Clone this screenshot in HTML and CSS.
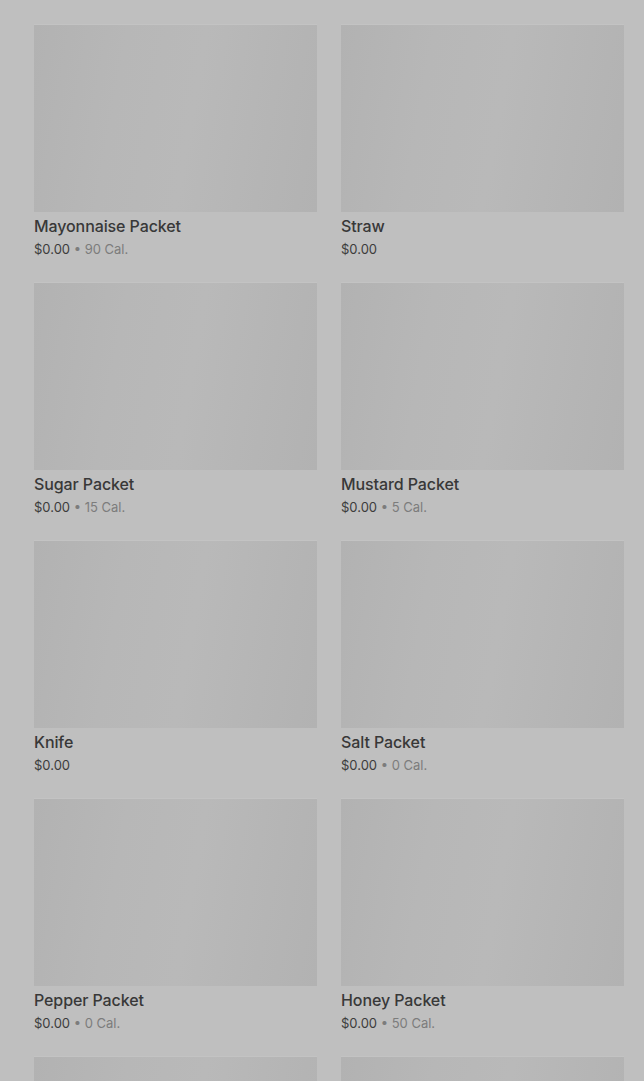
FILE: index.html
```html
<!DOCTYPE html>
<html lang="en">
<head>
    <title>Menu Items</title>
    <link rel="stylesheet" href="styles.css">
</head>
<body>
    <div class="menu-grid">
        <div class="item">
            <div class="item-image"></div>
            <div class="item-name">Ketchup Packet</div>
            <div class="item-meta">$0.00 <span class="cal">• 10 Cal.</span></div>
        </div>
        <div class="item">
            <div class="item-image"></div>
            <div class="item-name">Napkins</div>
            <div class="item-meta">$0.00 <span class="cal">• 0 Cal.</span></div>
        </div>

        <div class="item">
            <div class="item-image"></div>
            <div class="item-name">Mayonnaise Packet</div>
            <div class="item-meta">$0.00 <span class="cal">• 90 Cal.</span></div>
        </div>
        <div class="item">
            <div class="item-image"></div>
            <div class="item-name">Straw</div>
            <div class="item-meta">$0.00</div>
        </div>

        <div class="item">
            <div class="item-image"></div>
            <div class="item-name">Sugar Packet</div>
            <div class="item-meta">$0.00 <span class="cal">• 15 Cal.</span></div>
        </div>
        <div class="item">
            <div class="item-image"></div>
            <div class="item-name">Mustard Packet</div>
            <div class="item-meta">$0.00 <span class="cal">• 5 Cal.</span></div>
        </div>

        <div class="item">
            <div class="item-image"></div>
            <div class="item-name">Knife</div>
            <div class="item-meta">$0.00</div>
        </div>
        <div class="item">
            <div class="item-image"></div>
            <div class="item-name">Salt Packet</div>
            <div class="item-meta">$0.00 <span class="cal">• 0 Cal.</span></div>
        </div>

        <div class="item">
            <div class="item-image"></div>
            <div class="item-name">Pepper Packet</div>
            <div class="item-meta">$0.00 <span class="cal">• 0 Cal.</span></div>
        </div>
        <div class="item">
            <div class="item-image"></div>
            <div class="item-name">Honey Packet</div>
            <div class="item-meta">$0.00 <span class="cal">• 50 Cal.</span></div>
        </div>

        <div class="item">
            <div class="item-image"></div>
            <div class="item-name">Fork</div>
            <div class="item-meta">$0.00</div>
        </div>
        <div class="item">
            <div class="item-image"></div>
            <div class="item-name">Spoon</div>
            <div class="item-meta">$0.00</div>
        </div>
    </div>
</body>
</html>
```

FILE: styles.css
```css
body {
    margin: 0;
    background: #bfbfbf;
    font-family: Inter, "Noto Sans", sans-serif;
    color: #3a3a3a;
    overflow: hidden;
}
.menu-grid {
    display: grid;
    grid-template-columns: 283px 283px;
    column-gap: 24px;
    row-gap: 25px;
    margin-top: -233px;
    padding-left: 34px;
}
.item-image {
    height: 187px;
    background: linear-gradient(100deg, #b2b2b2 0%, #b7b7b7 30%, #b9b9b9 55%, #b5b5b5 80%, #b2b2b2 100%);
    box-shadow: 0 -1px 0 #c3c3c3;
}
.item-name {
    margin-top: 4px;
    font-size: 16px;
    font-weight: 500;
    line-height: 20px;
    letter-spacing: -0.1px;
    color: #383838;
}
.item-meta {
    margin-top: 5px;
    font-size: 13px;
    line-height: 17px;
    color: #3c3c3c;
}
.cal {
    color: #7c7c7c;
}
```
